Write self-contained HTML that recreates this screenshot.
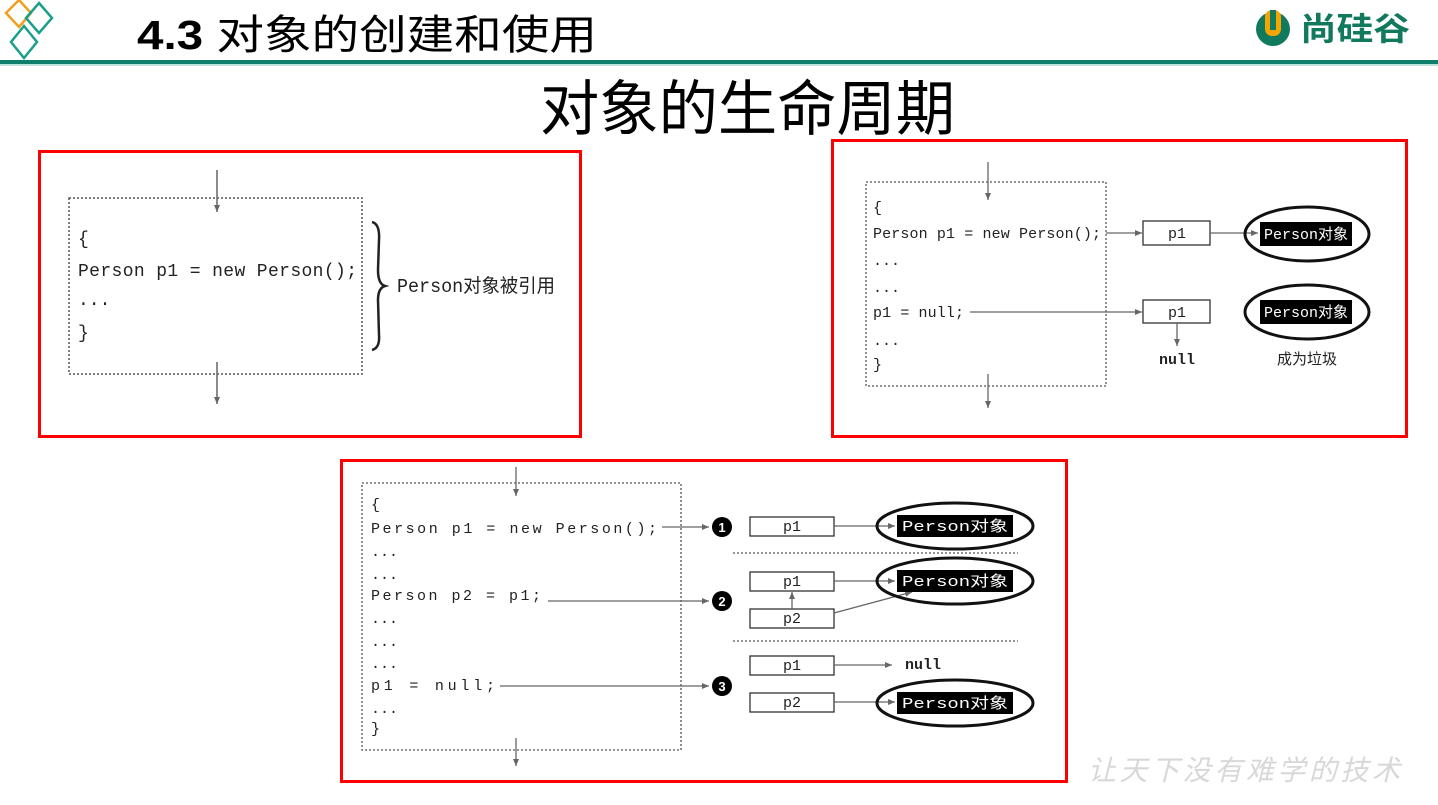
<!DOCTYPE html>
<html><head><meta charset="utf-8"><style>
html,body{margin:0;padding:0;background:#fff;width:1438px;height:805px;overflow:hidden}
svg{display:block}
.m{font-family:"Liberation Mono","Noto Sans CJK SC",monospace;fill:#222}
.c{font-family:"Liberation Sans","Noto Sans CJK SC",sans-serif}
</style></head><body>
<svg width="1438" height="805" viewBox="0 0 1438 805" xmlns="http://www.w3.org/2000/svg">
<defs>
<marker id="a" markerWidth="8" markerHeight="8" refX="7" refY="4" orient="auto" markerUnits="userSpaceOnUse"><path d="M0,1 L7,4 L0,7 Z" fill="#666"/></marker>
</defs>
<!-- header -->
<path d="M19,0 L31,13 L19,27 L6,13 Z" fill="none" stroke="#f0a020" stroke-width="2.5"/>
<path d="M39,3 L52,18 L39,33 L26,18 Z" fill="none" stroke="#1aa08a" stroke-width="2.5"/>
<path d="M24,26 L37,42 L24,58 L11,42 Z" fill="none" stroke="#1aa08a" stroke-width="2.5"/>
<text x="137" y="49" class="c" font-size="41" fill="#000" textLength="460" lengthAdjust="spacingAndGlyphs"><tspan font-weight="bold">4.3</tspan> 对象的创建和使用</text>
<rect x="0" y="60" width="1438" height="4" fill="#0e7f6a"/>
<rect x="0" y="64" width="1438" height="2" fill="#bfe3da"/>
<!-- logo -->
<circle cx="1273" cy="29" r="17" fill="#117a5e"/>
<rect x="1265" y="10" width="16" height="26" rx="7" fill="#f5a500"/>
<rect x="1270" y="10" width="6" height="20" fill="#117a5e"/>
<text x="1300" y="40" class="c" font-size="32" font-weight="bold" fill="#117a5e" textLength="110" lengthAdjust="spacingAndGlyphs">尚硅谷</text>
<!-- main title -->
<text x="540" y="130" class="c" font-size="60" fill="#000" textLength="415" lengthAdjust="spacingAndGlyphs">对象的生命周期</text>

<!-- panel 1 -->
<rect x="39.5" y="151.5" width="541" height="285" fill="none" stroke="#f00" stroke-width="3"/>
<rect x="69" y="198" width="293" height="176" fill="none" stroke="#555" stroke-width="1.5" stroke-dasharray="2,2"/>
<line x1="217" y1="170" x2="217" y2="212" stroke="#666" stroke-width="1.5" marker-end="url(#a)"/>
<line x1="217" y1="362" x2="217" y2="404" stroke="#666" stroke-width="1.5" marker-end="url(#a)"/>
<text class="m" font-size="18" x="78" y="244">{</text>
<text class="m" font-size="18" x="78" y="276" textLength="279">Person p1 = new Person();</text>
<text class="m" font-size="18" x="78" y="305">...</text>
<text class="m" font-size="18" x="78" y="338">}</text>
<path d="M372,222 Q380,224 379,240 L378,270 Q378,284 385,286 Q378,288 378,300 L379,335 Q380,348 372,350" fill="none" stroke="#222" stroke-width="2.5"/>
<text class="m" font-size="19" x="397" y="292" textLength="158" lengthAdjust="spacingAndGlyphs">Person对象被引用</text>

<!-- panel 2 -->
<rect x="832.5" y="140.5" width="574" height="296" fill="none" stroke="#f00" stroke-width="3"/>
<rect x="866" y="182" width="240" height="204" fill="none" stroke="#555" stroke-width="1.3" stroke-dasharray="2,2"/>
<line x1="988" y1="162" x2="988" y2="200" stroke="#666" stroke-width="1.3" marker-end="url(#a)"/>
<line x1="988" y1="374" x2="988" y2="408" stroke="#666" stroke-width="1.3" marker-end="url(#a)"/>
<g class="m" font-size="15">
<text x="873" y="212">{</text>
<text x="873" y="238" textLength="228">Person p1 = new Person();</text>
<text x="873" y="265">...</text>
<text x="873" y="292">...</text>
<text x="873" y="317" textLength="91">p1 = null;</text>
<text x="873" y="345">...</text>
<text x="873" y="369">}</text>
</g>
<line x1="1106" y1="233" x2="1142" y2="233" stroke="#666" stroke-width="1.3" marker-end="url(#a)"/>
<rect x="1143" y="221" width="67" height="24" fill="#fff" stroke="#333" stroke-width="1.3"/>
<text class="m" font-size="15" x="1177" y="238" text-anchor="middle">p1</text>
<line x1="1210" y1="233" x2="1258" y2="233" stroke="#666" stroke-width="1.3" marker-end="url(#a)"/>
<ellipse cx="1307" cy="234" rx="62" ry="27" fill="none" stroke="#111" stroke-width="3"/>
<rect x="1260" y="222" width="92" height="24" fill="#000"/>
<text class="m" font-size="15" x="1306" y="239" text-anchor="middle" style="fill:#fff" textLength="84" lengthAdjust="spacingAndGlyphs">Person对象</text>
<line x1="970" y1="312" x2="1142" y2="312" stroke="#666" stroke-width="1.3" marker-end="url(#a)"/>
<rect x="1143" y="300" width="67" height="23" fill="#fff" stroke="#333" stroke-width="1.3"/>
<text class="m" font-size="15" x="1177" y="317" text-anchor="middle">p1</text>
<line x1="1177" y1="323" x2="1177" y2="346" stroke="#666" stroke-width="1.3" marker-end="url(#a)"/>
<text class="m" font-size="15" font-weight="bold" x="1177" y="364" text-anchor="middle">null</text>
<ellipse cx="1307" cy="312" rx="62" ry="27" fill="none" stroke="#111" stroke-width="3"/>
<rect x="1260" y="300" width="92" height="24" fill="#000"/>
<text class="m" font-size="15" x="1306" y="317" text-anchor="middle" style="fill:#fff" textLength="84" lengthAdjust="spacingAndGlyphs">Person对象</text>
<text class="c" font-size="15" x="1307" y="364" text-anchor="middle" fill="#222">成为垃圾</text>

<!-- panel 3 -->
<rect x="341.5" y="460.5" width="725" height="321" fill="none" stroke="#f00" stroke-width="3"/>
<rect x="362" y="483" width="319" height="267" fill="none" stroke="#555" stroke-width="1.3" stroke-dasharray="2,2"/>
<line x1="516" y1="467" x2="516" y2="496" stroke="#666" stroke-width="1.3" marker-end="url(#a)"/>
<line x1="516" y1="738" x2="516" y2="766" stroke="#666" stroke-width="1.3" marker-end="url(#a)"/>
<g class="m" font-size="15">
<text x="371" y="509">{</text>
<text x="371" y="533" textLength="286">Person p1 = new Person();</text>
<text x="371" y="556">...</text>
<text x="371" y="579">...</text>
<text x="371" y="600" textLength="170">Person p2 = p1;</text>
<text x="371" y="623">...</text>
<text x="371" y="646">...</text>
<text x="371" y="668">...</text>
<text x="371" y="690" textLength="124">p1  = null;</text>
<text x="371" y="713">...</text>
<text x="371" y="733">}</text>
</g>
<line x1="662" y1="527" x2="709" y2="527" stroke="#666" stroke-width="1.3" marker-end="url(#a)"/>
<line x1="548" y1="601" x2="709" y2="601" stroke="#666" stroke-width="1.3" marker-end="url(#a)"/>
<line x1="500" y1="686" x2="709" y2="686" stroke="#666" stroke-width="1.3" marker-end="url(#a)"/>
<g class="c" font-size="13" font-weight="bold" text-anchor="middle">
<circle cx="722" cy="527" r="10" fill="#000"/><text x="722" y="532" fill="#fff">1</text>
<circle cx="722" cy="601" r="10" fill="#000"/><text x="722" y="606" fill="#fff">2</text>
<circle cx="722" cy="686" r="10" fill="#000"/><text x="722" y="691" fill="#fff">3</text>
</g>
<line x1="733" y1="553" x2="1018" y2="553" stroke="#555" stroke-width="1.3" stroke-dasharray="2,2"/>
<line x1="733" y1="641" x2="1018" y2="641" stroke="#555" stroke-width="1.3" stroke-dasharray="2,2"/>
<g stroke="#333" stroke-width="1.3" fill="#fff">
<rect x="750" y="517" width="84" height="19"/>
<rect x="750" y="572" width="84" height="19"/>
<rect x="750" y="609" width="84" height="19"/>
<rect x="750" y="656" width="84" height="19"/>
<rect x="750" y="693" width="84" height="19"/>
</g>
<g class="m" font-size="15" text-anchor="middle">
<text x="792" y="531">p1</text>
<text x="792" y="586">p1</text>
<text x="792" y="623">p2</text>
<text x="792" y="670">p1</text>
<text x="792" y="707">p2</text>
</g>
<g stroke="#666" stroke-width="1.3">
<line x1="834" y1="526" x2="895" y2="526" marker-end="url(#a)"/>
<line x1="834" y1="581" x2="895" y2="581" marker-end="url(#a)"/>
<line x1="792" y1="609" x2="792" y2="592" marker-end="url(#a)"/>
<line x1="834" y1="613" x2="912" y2="592" marker-end="url(#a)"/>
<line x1="834" y1="665" x2="892" y2="665" marker-end="url(#a)"/>
<line x1="834" y1="702" x2="895" y2="702" marker-end="url(#a)"/>
</g>
<text class="m" font-size="15" font-weight="bold" x="905" y="669">null</text>
<g>
<ellipse cx="955" cy="526" rx="78" ry="23" fill="none" stroke="#111" stroke-width="3"/>
<rect x="897" y="515" width="116" height="22" fill="#000"/>
<text class="m" font-size="15" x="955" y="531" text-anchor="middle" style="fill:#fff" textLength="106" lengthAdjust="spacingAndGlyphs">Person对象</text>
<ellipse cx="955" cy="581" rx="78" ry="23" fill="none" stroke="#111" stroke-width="3"/>
<rect x="897" y="570" width="116" height="22" fill="#000"/>
<text class="m" font-size="15" x="955" y="586" text-anchor="middle" style="fill:#fff" textLength="106" lengthAdjust="spacingAndGlyphs">Person对象</text>
<ellipse cx="955" cy="703" rx="78" ry="23" fill="none" stroke="#111" stroke-width="3"/>
<rect x="897" y="692" width="116" height="22" fill="#000"/>
<text class="m" font-size="15" x="955" y="708" text-anchor="middle" style="fill:#fff" textLength="106" lengthAdjust="spacingAndGlyphs">Person对象</text>
</g>
<!-- watermark -->
<text class="c" x="1088" y="780" font-size="28" fill="#d8d8d8" font-style="italic" textLength="312">让天下没有难学的技术</text>
</svg>
</body></html>
